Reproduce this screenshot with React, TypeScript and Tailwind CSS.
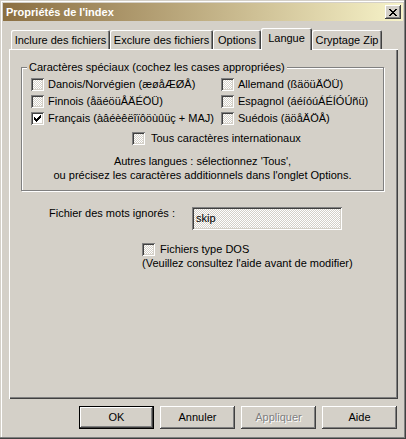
const raised =
  'shadow-[inset_-1px_-1px_#404040,inset_1px_1px_#ffffff,inset_-2px_-2px_#808080,inset_2px_2px_#d4d0c8]';
const sunken =
  'shadow-[inset_1px_1px_#808080,inset_-1px_-1px_#ffffff,inset_2px_2px_#404040,inset_-2px_-2px_#d4d0c8]';
const dither = 'bg-[repeating-conic-gradient(#ffffff_0_25%,#d4d0c8_0_50%)] bg-[length:2px_2px]';

function Check({ checked }: { checked?: boolean }) {
  return (
    <span
      className={`flex h-[13px] w-[13px] shrink-0 items-center justify-center ${sunken} ${
        checked ? 'bg-white' : dither
      }`}
    >
      {checked && (
        <svg width="7" height="7" viewBox="0 0 7 7" shapeRendering="crispEdges">
          <path
            fill="#000"
            d="M6 0h1v1h-1z M5 1h2v1h-2z M0 2h1v1h-1z M4 2h3v1h-3z M0 3h2v1h-2z M3 3h3v1h-3z M0 4h5v1h-5z M1 5h3v1h-3z M2 6h1v1h-1z"
          />
        </svg>
      )}
    </span>
  );
}

function Option({ label, checked }: { label: string; checked?: boolean }) {
  return (
    <div className="flex h-[17px] items-center gap-[4px] pl-[9px]">
      <Check checked={checked} />
      <span className="whitespace-nowrap">{label}</span>
    </div>
  );
}

const tabs = [
  { label: 'Inclure des fichiers', w: 'w-[99px]' },
  { label: 'Exclure des fichiers', w: 'w-[103px]' },
  { label: 'Options', w: 'w-[48px]' },
  { label: 'Langue', w: 'w-[51px]', active: true },
  { label: 'Cryptage Zip', w: 'w-[70px]' },
];

export default function App() {
  return (
    <div
      className="flex h-[439px] w-[406px] flex-col bg-[#d4d0c8] p-[3px] text-[11px] leading-[13px] text-black font-['Liberation_Sans',Arial,sans-serif] shadow-[inset_-1px_-1px_#404040,inset_-2px_-2px_#808080,inset_1px_1px_#d4d0c8,inset_2px_2px_#ffffff]"
    >
      {/* title bar */}
      <div className="flex h-[18px] shrink-0 items-center justify-between bg-linear-to-r from-[#8b6f42] to-[#f7f3c9] px-[2px]">
        <span className="pl-[1px] font-bold text-white">Propriétés de l'index</span>
        <button className={`flex h-[14px] w-[16px] items-center justify-center bg-[#d4d0c8] ${raised}`}>
          <svg width="8" height="7" viewBox="0 0 8 7" shapeRendering="crispEdges">
            <path
              fill="#000"
              d="M0 0h2v1h-2z M6 0h2v1h-2z M1 1h2v1h-2z M5 1h2v1h-2z M2 2h4v1h-4z M3 3h2v1h-2z M2 4h4v1h-4z M1 5h2v1h-2z M5 5h2v1h-2z M0 6h2v1h-2z M6 6h2v1h-2z"
            />
          </svg>
        </button>
      </div>

      <div className="shrink-0 pl-[6px] pr-[5px]">
        {/* tabs */}
        <div className="mt-[7px] flex h-[21px] items-end pl-[2px]">
          {tabs.map((t) => (
            <div
              key={t.label}
              className={`${t.w} flex items-center justify-center rounded-t-[2px] bg-[#d4d0c8] shadow-[inset_1px_1px_#ffffff,inset_-1px_0_#404040,inset_-2px_0_#808080] ${
                t.active ? 'relative z-10 mb-[-1px] h-[22px] pb-[2px]' : 'h-[19px] pt-[1px]'
              }`}
            >
              <span className="whitespace-nowrap">{t.label}</span>
            </div>
          ))}
        </div>

        {/* panel */}
        <div className="flex h-[350px] w-[389px] flex-col pt-[18px] shadow-[inset_1px_1px_#ffffff,inset_-1px_-1px_#404040,inset_-2px_-2px_#808080]">
          <div className="relative ml-[12px] h-[124px] w-[363px] border border-[#808080] pt-[8px] shadow-[1px_1px_0_#ffffff,inset_1px_1px_0_#ffffff]">
            <span className="absolute -top-[7px] left-[5px] whitespace-nowrap bg-[#d4d0c8] px-[2px]">
              Caractères spéciaux (cochez les cases appropriées)
            </span>
            <div className="grid grid-cols-[190px_1fr]">
              <Option label="Danois/Norvégien (æøåÆØÅ)" />
              <Option label="Allemand (ßäöüÄÖÜ)" />
              <Option label="Finnois (åäéöüÅÄÉÖÜ)" />
              <Option label="Espagnol (áéíóúÁÉÍÓÚñü)" />
              <Option label="Français (àâéèêëîïôöùûüç + MAJ)" checked />
              <Option label="Suédois (äöåÄÖÅ)" />
            </div>
            <div className="mt-[3px] flex h-[17px] items-center gap-[6px] pl-[110px]">
              <Check />
              <span>Tous caractères internationaux</span>
            </div>
            <div className="mt-[7px] text-center leading-[14px]">
              <p>Autres langues : sélectionnez 'Tous',</p>
              <p>ou précisez les caractères additionnels dans l'onglet Options.</p>
            </div>
          </div>

          <div className="mt-[16px] flex items-start pl-[40px]">
            <span className="w-[143px]">Fichier des mots ignorés :</span>
            <div className={`flex h-[23px] w-[150px] items-center pl-[4px] ${sunken} ${dither}`}>skip</div>
          </div>

          <div className="mt-[13px] flex h-[13px] items-center gap-[5px] pl-[133px]">
            <Check />
            <span>Fichiers type DOS</span>
          </div>
          <p className="pl-[133px] leading-[14px]">(Veuillez consultez l'aide avant de modifier)</p>
        </div>
      </div>

      {/* buttons */}
      <div className="mt-[7px] flex justify-end gap-[6px] pr-[6px]">
        <button className="h-[23px] w-[75px] border border-black">
          <span className={`flex h-full w-full items-center justify-center ${raised}`}>OK</span>
        </button>
        <button className={`flex h-[23px] w-[75px] items-center justify-center ${raised}`}>Annuler</button>
        <button
          className={`flex h-[23px] w-[75px] items-center justify-center text-[#808080] [text-shadow:1px_1px_0_#ffffff] ${raised}`}
        >
          Appliquer
        </button>
        <button className={`flex h-[23px] w-[75px] items-center justify-center ${raised}`}>Aide</button>
      </div>
    </div>
  );
}
